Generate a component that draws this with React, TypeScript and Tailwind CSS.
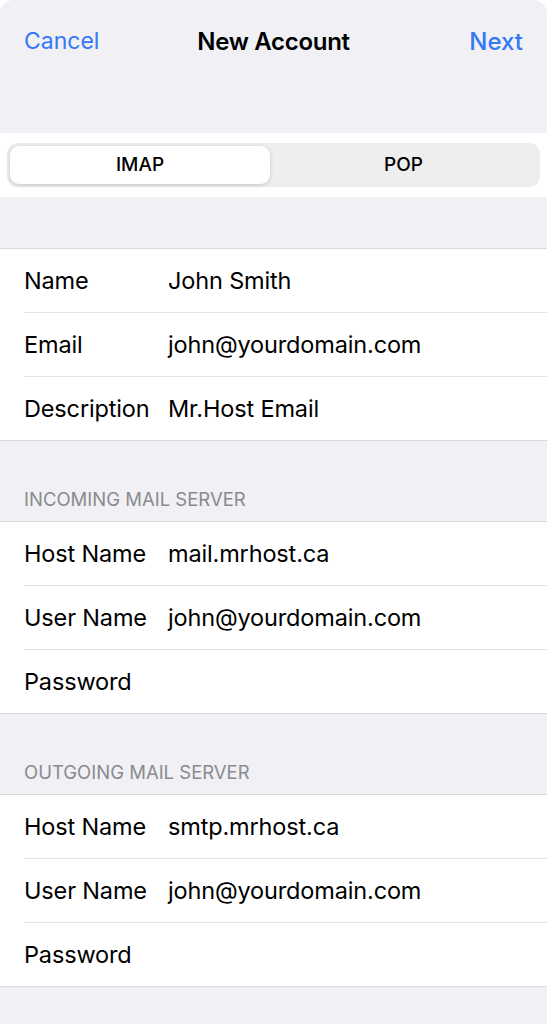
import React from "react";

const FONT = { fontFamily: "Inter, 'Noto Sans', sans-serif" };

type Row = { label: string; value?: string };

const ACCOUNT: Row[] = [
  { label: "Name", value: "John Smith" },
  { label: "Email", value: "john@yourdomain.com" },
  { label: "Description", value: "Mr.Host Email" },
];

const INCOMING: Row[] = [
  { label: "Host Name", value: "mail.mrhost.ca" },
  { label: "User Name", value: "john@yourdomain.com" },
  { label: "Password" },
];

const OUTGOING: Row[] = [
  { label: "Host Name", value: "smtp.mrhost.ca" },
  { label: "User Name", value: "john@yourdomain.com" },
  { label: "Password" },
];

// Grouped table section
function Group({ rows }: { rows: Row[] }) {
  return (
    <div className="bg-white border-y border-[#d9d9dd]">
      {rows.map((r, i) => {
        const last = i === rows.length - 1;
        return (
          <div key={i} className="pl-6">
            <div
              className={`flex items-center text-[23.5px] text-black tracking-[-0.15px] ${
                last ? "h-[63px]" : "h-[64px] border-b border-[#e2e2e6]"
              }`}
            >
              <span className="w-[144px] shrink-0">{r.label}</span>
              {r.value && <span>{r.value}</span>}
            </div>
          </div>
        );
      })}
    </div>
  );
}

function Header({ title }: { title: string }) {
  return (
    <div className="h-[80px] flex items-end pb-[7px] pl-6 text-[18.5px] text-[#8a8a8e]">
      {title}
    </div>
  );
}

export default function App() {
  return (
    <div className="w-[547px] h-[1024px] bg-white overflow-hidden" style={FONT}>
      <div className="h-full bg-[#f0f0f5] rounded-t-[14px]">
        {/* Nav bar */}
        <div className="h-[83px] flex items-center px-6">
          <div className="flex-1 text-[23px] text-[#3478f6]">Cancel</div>
          <div className="text-[24px] font-semibold text-black tracking-[-0.3px]">New Account</div>
          <div className="flex-1 text-right text-[24px] text-[#3478f6] font-medium">Next</div>
        </div>
        <div className="h-[50px]" />

        {/* Segmented control */}
        <div className="bg-white h-[64px] px-[7px] flex items-center">
          <div className="w-full h-[44px] rounded-[11px] bg-[#eeeeef] p-[3px] flex">
            <div className="w-[260px] bg-white rounded-[9px] shadow-[0_1px_4px_rgba(0,0,0,0.18)] flex items-center justify-center text-[19px] font-medium">
              IMAP
            </div>
            <div className="flex-1 flex items-center justify-center text-[19px] font-medium">
              POP
            </div>
          </div>
        </div>
        <div className="h-[51px]" />

        <Group rows={ACCOUNT} />
        <Header title="INCOMING MAIL SERVER" />
        <Group rows={INCOMING} />
        <Header title="OUTGOING MAIL SERVER" />
        <Group rows={OUTGOING} />
      </div>
    </div>
  );
}
